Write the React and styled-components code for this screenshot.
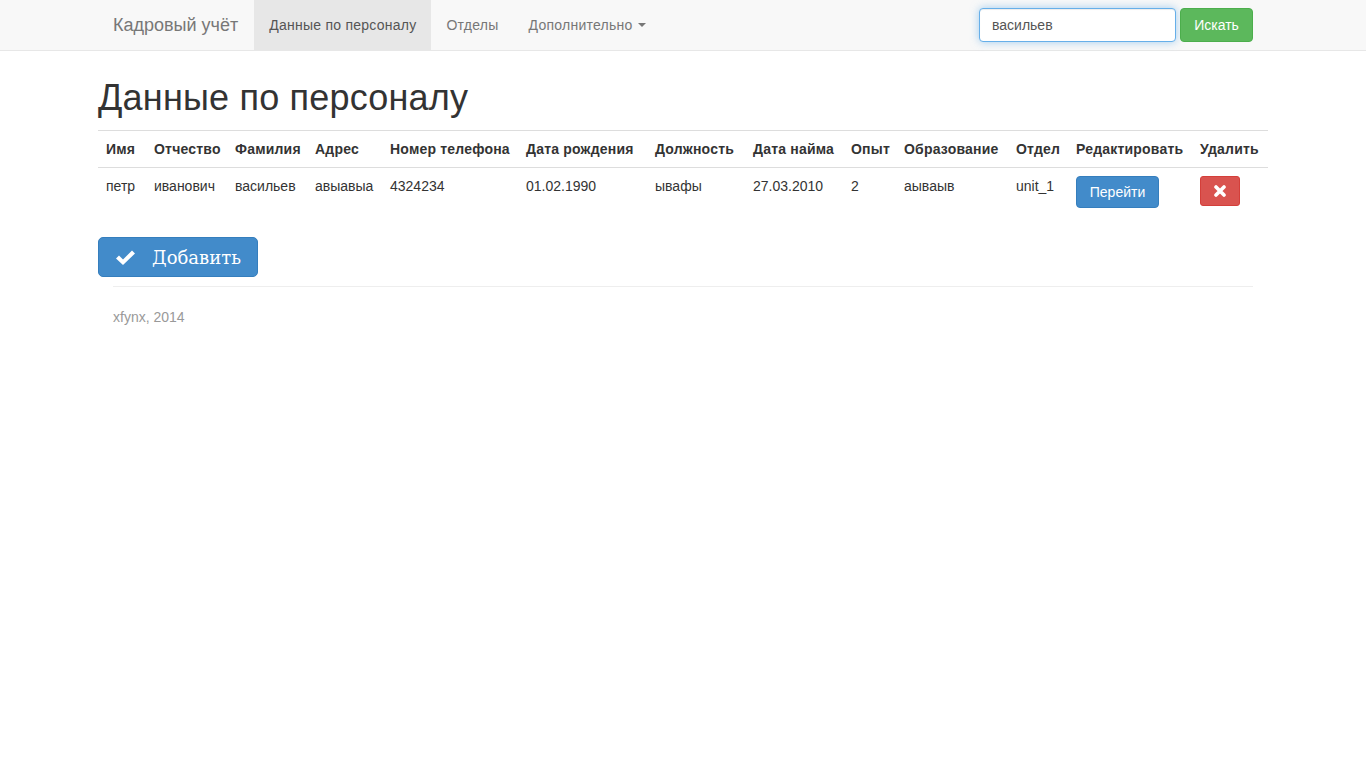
import React from "react";
import styled, { createGlobalStyle } from "styled-components";

const Global = createGlobalStyle`
  html, body { margin: 0; padding: 0; background: #fff; }
  body {
    font-family: "Liberation Sans", Arial, Helvetica, sans-serif;
    font-size: 14px;
    line-height: 20px;
    color: #333;
  }
  * { box-sizing: border-box; }
`;

const Navbar = styled.nav`
  height: 51px;
  background: #f8f8f8;
  border-bottom: 1px solid #e7e7e7;
`;

const NavInner = styled.div`
  width: 1170px;
  margin: 0 auto;
  padding: 0 15px;
  display: flex;
  align-items: stretch;
  height: 50px;
`;

const Brand = styled.a`
  margin-left: -15px;
  padding: 15px 16px 15px 15px;
  font-size: 18px;
  line-height: 20px;
  color: #777;
  text-decoration: none;
`;

const NavList = styled.ul`
  display: flex;
  list-style: none;
  margin: 0;
  padding: 0;
`;

const NavItem = styled.li`
  display: flex;
`;

const NavLink = styled.a`
  display: flex;
  align-items: center;
  padding: 15px;
  line-height: 20px;
  letter-spacing: 0.25px;
  color: ${(p) => (p.$active ? "#555" : "#777")};
  background: ${(p) => (p.$active ? "#e7e7e7" : "transparent")};
  text-decoration: none;
`;

const Caret = styled.span`
  display: inline-block;
  width: 0;
  height: 0;
  margin-left: 5px;
  border-top: 4px solid #777;
  border-left: 4px solid transparent;
  border-right: 4px solid transparent;
  vertical-align: middle;
`;

const SearchForm = styled.form`
  margin-left: auto;
  margin-right: -15px;
  padding: 8px 15px;
  display: flex;
  gap: 4px;
`;

const SearchInput = styled.input`
  width: 197px;
  height: 34px;
  padding: 6px 12px;
  font-family: inherit;
  font-size: 14px;
  color: #555;
  border: 1px solid #66afe9;
  border-radius: 4px;
  outline: 0;
  box-shadow: inset 0 1px 1px rgba(0, 0, 0, 0.075), 0 0 8px rgba(102, 175, 233, 0.6);
`;

const Btn = styled.button`
  font-family: "Liberation Sans", Arial, sans-serif;
  font-size: 14px;
  line-height: 20px;
  border: 1px solid;
  border-radius: 4px;
  color: #fff;
  cursor: pointer;
  display: inline-flex;
  align-items: center;
  justify-content: center;
`;

const SuccessBtn = styled(Btn)`
  height: 34px;
  width: 73px;
  padding: 6px 12px;
  background: #5cb85c;
  border-color: #4cae4c;
`;

const PrimaryBtn = styled(Btn)`
  height: 32px;
  width: 83px;
  padding: 5px 12px;
  background: #428bca;
  border-color: #357ebd;
`;

const DangerBtn = styled(Btn)`
  height: 30px;
  width: 40px;
  padding: 0;
  border-radius: 3px;
  background: #d9534f;
  border-color: #d43f3a;
`;

const AddBtn = styled.button`
  margin-top: 21px;
  height: 40px;
  width: 160px;
  padding: 0 0 0 17px;
  display: flex;
  align-items: center;
  gap: 17px;
  background: #428bca;
  border: 1px solid #357ebd;
  border-radius: 5px;
  color: #fff;
  font-family: "DejaVu Serif", "Liberation Serif", serif;
  font-size: 18px;
  cursor: pointer;
`;

const Main = styled.main`
  width: 1170px;
  margin: 0 auto;
  padding-top: 27px;
`;

const Title = styled.h1`
  margin: 0 0 12px;
  font-size: 36px;
  line-height: 40px;
  font-weight: 500;
  letter-spacing: 0.2px;
  color: #333;
`;

const Table = styled.table`
  width: 100%;
  border-collapse: collapse;
  border-spacing: 0;
  table-layout: fixed;
  margin-bottom: 20px;
`;

const Cell = styled.td`
  padding: 8px;
  line-height: 20px;
  vertical-align: top;
  border-top: 1px solid #ddd;
  text-align: left;
  font-weight: ${(p) => (p.$head ? 700 : 400)};
  letter-spacing: ${(p) => (p.$head ? "0.2px" : "0")};
  white-space: nowrap;
`;

const Footer = styled.footer`
  width: 1170px;
  margin: 0 auto;
  padding: 0 15px;
`;

const Rule = styled.hr`
  margin: 9px 0 20px;
  border: 0;
  border-top: 1px solid #eee;
`;

const Copy = styled.p`
  margin: 0;
  color: #999;
`;

const cols = [48, 81, 80, 75, 136, 129, 98, 98, 53, 112, 60, 124, 76];
const heads = [
  "Имя", "Отчество", "Фамилия", "Адрес", "Номер телефона", "Дата рождения",
  "Должность", "Дата найма", "Опыт", "Образование", "Отдел", "Редактировать", "Удалить",
];
const row = [
  "петр", "иванович", "васильев", "авыавыа", "4324234", "01.02.1990",
  "ывафы", "27.03.2010", "2", "аываыв", "unit_1",
];

const CheckIcon = () => (
  <svg width="19" height="15" viewBox="0 0 19 15">
    <polygon points="0,8.5 3,5.5 7,9.5 16,0.5 19,3.5 7,15" fill="#fff" />
  </svg>
);

const RemoveIcon = () => (
  <svg width="12" height="12" viewBox="0 0 12 12">
    <path d="M2 2 L10 10 M10 2 L2 10" stroke="#fff" strokeWidth="3.6" strokeLinecap="round" />
  </svg>
);

export default function App() {
  return (
    <>
      <Global />
      <Navbar>
        <NavInner>
          <Brand href="#">Кадровый учёт</Brand>
          <NavList>
            <NavItem><NavLink href="#" $active>Данные по персоналу</NavLink></NavItem>
            <NavItem><NavLink href="#">Отделы</NavLink></NavItem>
            <NavItem><NavLink href="#">Дополнительно <Caret /></NavLink></NavItem>
          </NavList>
          <SearchForm onSubmit={(e) => e.preventDefault()}>
            <SearchInput defaultValue="васильев" />
            <SuccessBtn type="submit">Искать</SuccessBtn>
          </SearchForm>
        </NavInner>
      </Navbar>
      <Main>
        <Title>Данные по персоналу</Title>
        <Table>
          <colgroup>
            {cols.map((w, i) => (
              <col key={i} style={{ width: w }} />
            ))}
          </colgroup>
          <tbody>
            <tr>
              {heads.map((h) => (
                <Cell key={h} $head>{h}</Cell>
              ))}
            </tr>
            <tr>
              {row.map((v, i) => (
                <Cell key={i}>{v}</Cell>
              ))}
              <Cell><PrimaryBtn>Перейти</PrimaryBtn></Cell>
              <Cell><DangerBtn><RemoveIcon /></DangerBtn></Cell>
            </tr>
          </tbody>
        </Table>
        <AddBtn><CheckIcon />Добавить</AddBtn>
      </Main>
      <Footer>
        <Rule />
        <Copy>xfynx, 2014</Copy>
      </Footer>
    </>
  );
}
